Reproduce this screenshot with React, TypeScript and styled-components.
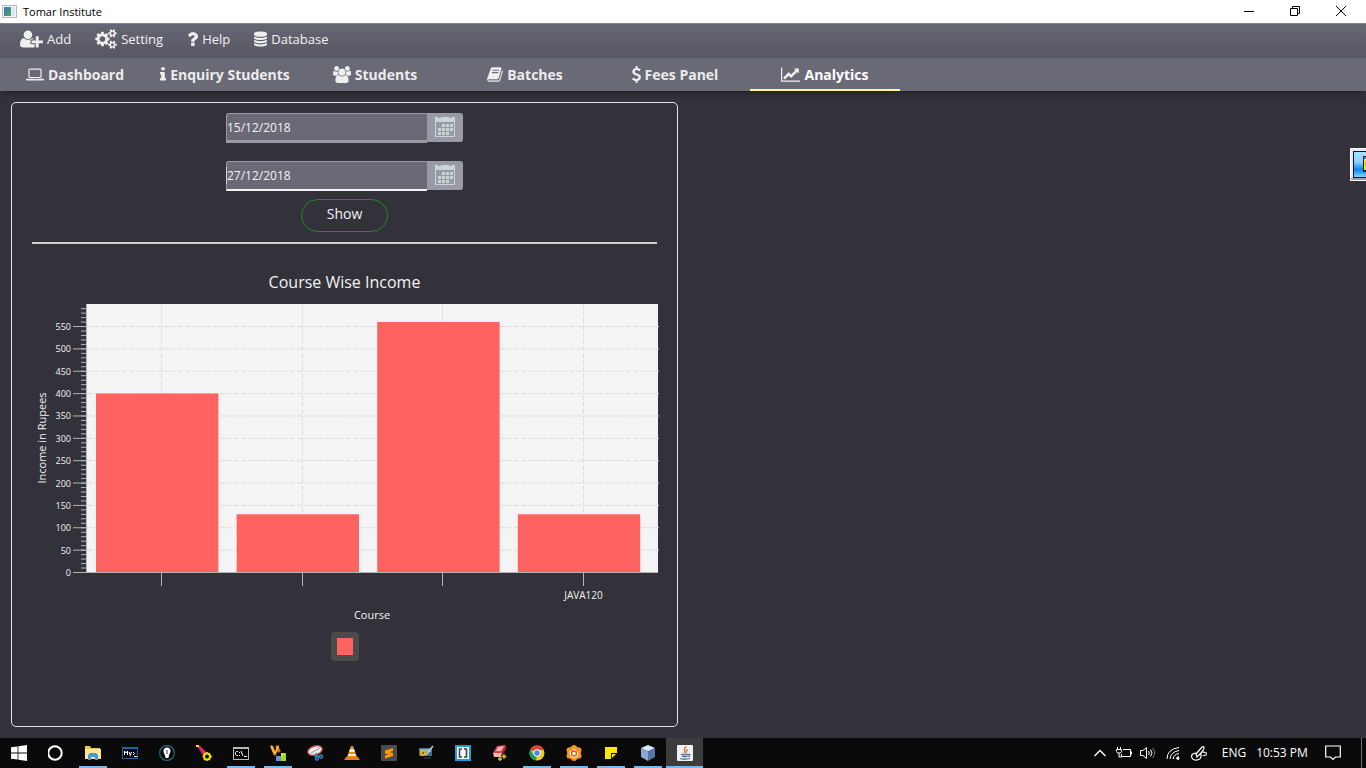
import React from "react";
import styled, { createGlobalStyle, css } from "styled-components";

const GlobalStyle = createGlobalStyle`
  *, *::before, *::after { box-sizing: border-box; }
  body { margin: 0; background: #33323b; font-family: "Open Sans", "Noto Sans", sans-serif; }
  button, input { font: inherit; color: inherit; border: 0; margin: 0; padding: 0; background: none; }
  h1, h2 { margin: 0; font-weight: 400; }
  svg { display: block; flex: none; }
`;

const Page = styled.div`
  position: relative;
  min-height: 100vh;
  display: flex;
  flex-direction: column;
  overflow: hidden;
  color: #f2f2f2;
`;

const TitleBar = styled.header`
  display: flex;
  align-items: center;
  height: 23px;
  padding-left: 2px;
  gap: 6px;
  background: #fff;
  color: #000;
`;

const WindowTitle = styled.h1`
  flex: 1;
  font-size: 11px;
  line-height: 22px;
`;

const WindowButton = styled.button`
  display: flex;
  align-items: center;
  justify-content: center;
  width: 46px;
  height: 20px;
`;

const WindowButtons = styled.div`
  display: flex;
  padding: 0 2px 2px 0;
`;

const MenuBar = styled.nav`
  display: flex;
  height: 35px;
  padding: 0 20px 4px;
  gap: 24px;
  border-top: 1px solid #82818d;
  background: linear-gradient(#666573, #585763);
`;

const MenuButton = styled.button`
  display: flex;
  align-items: center;
  gap: 4px;
  font-size: 13px;
  line-height: 20px;
`;

const Tabs = styled.nav`
  position: relative;
  display: flex;
  height: 33px;
  background: #6a6976;
  box-shadow: 0 5px 6px -3px rgba(0, 0, 0, 0.4);
`;

const Tab = styled.button<{ $active?: boolean }>`
  display: flex;
  align-items: center;
  justify-content: center;
  gap: 4px;
  width: 150px;
  padding-top: 2px;
  border-bottom: 2px solid ${(p) => (p.$active ? "#fffc8c" : "transparent")};
  color: ${(p) => (p.$active ? "#fff" : "#ececec")};
  font-size: 14px;
  font-weight: 700;
  line-height: 20px;
  white-space: nowrap;
`;

const Workspace = styled.main`
  flex: 1;
  display: grid;
  grid-template-columns: minmax(0, 1fr) minmax(0, 1fr);
  gap: 10px;
  padding: 11px;
`;

const Card = styled.section`
  display: flex;
  flex-direction: column;
  align-items: center;
  padding: 10px 20px;
  border: 1px solid #e4e4e6;
  border-radius: 5px;
`;

const DateField = styled.div<{ $focused?: boolean }>`
  position: relative;
  display: flex;
  width: 237px;
  height: 30px;
  margin-bottom: 18px;
  ${(p) =>
    p.$focused &&
    css`
      margin-bottom: 8px;
      &::before {
        content: "";
        position: absolute;
        left: 0;
        top: 6px;
        width: 1px;
        height: 17px;
        background: #d6d6da;
      }
    `}
`;

const DateInput = styled.input<{ $focused?: boolean }>`
  flex: 1;
  min-width: 0;
  padding: 0;
  border: 1px solid #9a99a6;
  border-width: 1px 0 ${(p) => (p.$focused ? 2 : 3)}px 1px;
  border-bottom-color: ${(p) => (p.$focused ? "#f4f4f4" : "#9a99a6")};
  border-top-left-radius: 3px;
  background: #6a6976;
  font-size: 12px;
  outline: none;
`;

const CalendarButton = styled.button`
  display: flex;
  align-items: center;
  justify-content: center;
  width: 36px;
  height: 29px;
  padding-bottom: 1px;
  border-radius: 0 3px 3px 0;
  background: #9a99a6;
`;

const ShowButton = styled.button`
  width: 87px;
  height: 33px;
  padding-bottom: 3px;
  border: 1px solid #228b22;
  border-radius: 17px;
  font-size: 14px;
  line-height: 28px;
`;

const Divider = styled.hr`
  width: 100%;
  height: 2px;
  margin: 10px 0 26px;
  border: 0;
  background: #cfcfcf;
`;

const ChartTitle = styled.h2`
  font-size: 16px;
  line-height: 24px;
`;

const ChartSvg = styled.svg`
  width: 100%;
  height: auto;
  margin-top: 10px;
  overflow: visible;
  fill: #f2f2f2;
  font-size: 10px;
`;

const Legend = styled.div`
  display: flex;
  padding: 6px;
  margin-top: 6px;
  border-radius: 4px;
  background: #4b4b49;
`;

const LegendSwatch = styled.span`
  width: 16px;
  height: 17px;
  background: #ff6361;
`;

const FloatingTool = styled.button`
  position: absolute;
  top: 148px;
  right: -17px;
  width: 33px;
  height: 33px;
  padding: 2px;
  border: 1px solid #fff;
  background: #e9e9ee;
  box-shadow: inset -1px -2px 0 #a0a0a4;
`;

const TaskBar = styled.footer`
  display: flex;
  height: 30px;
  background: #0a0a0a;
`;

const TaskButton = styled.button<{ $running?: boolean; $active?: boolean }>`
  position: relative;
  display: flex;
  align-items: center;
  justify-content: center;
  width: 37px;
  background: ${(p) => (p.$active ? "#3c3c3c" : "transparent")};
  &::after {
    content: "";
    display: ${(p) => (p.$running || p.$active ? "block" : "none")};
    position: absolute;
    bottom: 0;
    left: ${(p) => (p.$active ? 0 : 5)}px;
    right: ${(p) => (p.$active ? 0 : 4)}px;
    height: 2px;
    background: #76b9ed;
  }
`;

const Tray = styled.div`
  display: flex;
  margin-left: auto;
  padding-right: 4px;
`;

const TrayItem = styled.button<{ $width: number }>`
  display: flex;
  align-items: center;
  justify-content: center;
  width: ${(p) => p.$width}px;
  color: #fff;
  font-size: 12px;
  line-height: 16px;
  white-space: nowrap;
`;

const ShowDesktop = styled.button`
  width: 1px;
  margin-left: 3px;
  background: #6e6e6e;
`;

const glyphs = {
  userPlus: "M704 896q-159 0-271.5-112.5t-112.5-271.5 112.5-271.5 271.5-112.5 271.5 112.5 112.5 271.5-112.5 271.5-271.5 112.5zm960 128h352q13 0 22.5 9.5t9.5 22.5v192q0 13-9.5 22.5t-22.5 9.5h-352v352q0 13-9.5 22.5t-22.5 9.5h-192q-13 0-22.5-9.5t-9.5-22.5v-352h-352q-13 0-22.5-9.5t-9.5-22.5v-192q0-13 9.5-22.5t22.5-9.5h352v-352q0-13 9.5-22.5t22.5-9.5h192q13 0 22.5 9.5t9.5 22.5v352zm-736 224q0 52 38 90t90 38h256v238q-68 50-171 50h-874q-121 0-194-69t-73-190q0-53 3.5-103.5t14-109 26.5-108.5 43-97.5 62-81 85.5-53.5 111.5-20q19 0 39 17 79 61 154.5 91.5t164.5 30.5 164.5-30.5 154.5-91.5q20-17 39-17 132 0 217 96h-223q-52 0-90 38t-38 90v192z",
  cogs: "M896 896q0-106-75-181t-181-75-181 75-75 181 75 181 181 75 181-75 75-181zm768 512q0-52-38-90t-90-38-90 38-38 90q0 53 37.5 90.5t90.5 37.5 90.5-37.5 37.5-90.5zm0-1024q0-52-38-90t-90-38-90 38-38 90q0 53 37.5 90.5t90.5 37.5 90.5-37.5 37.5-90.5zm-384 421v185q0 10-7 19.5t-16 10.5l-155 24q-11 35-32 76 34 48 90 115 7 11 7 20 0 12-7 19-23 30-82.5 89.5t-78.5 59.5q-11 0-21-7l-115-90q-37 19-77 31-11 108-23 155-7 24-30 24h-186q-11 0-20-7.5t-10-17.5l-23-153q-34-10-75-31l-118 89q-7 7-20 7-11 0-21-8-144-133-144-160 0-9 7-19 10-14 41-53t47-61q-23-44-35-82l-152-24q-10-1-17-9.5t-7-19.5v-185q0-10 7-19.5t16-10.5l155-24q11-35 32-76-34-48-90-115-7-11-7-20 0-12 7-20 22-30 82-89t79-59q11 0 21 7l115 90q34-18 77-32 11-108 23-154 7-24 30-24h186q11 0 20 7.5t10 17.5l23 153q34 10 75 31l118-89q8-7 20-7 11 0 21 8 144 133 144 160 0 8-7 19-12 16-42 54t-45 60q23 48 34 82l152 23q10 2 17 10.5t7 19.5zm640 533v140q0 16-149 31-12 27-30 52 51 113 51 138 0 4-4 7-122 71-124 71-8 0-46-47t-52-68q-20 2-30 2t-30-2q-14 21-52 68t-46 47q-2 0-124-71-4-3-4-7 0-25 51-138-18-25-30-52-149-15-149-31v-140q0-16 149-31 13-29 30-52-51-113-51-138 0-4 4-7 4-2 35-20t59-34 30-16q8 0 46 46.5t52 67.5q20-2 30-2t30 2q51-71 92-112l6-2q4 0 124 70 4 3 4 7 0 25-51 138 17 23 30 52 149 15 149 31zm0-1024v140q0 16-149 31-12 27-30 52 51 113 51 138 0 4-4 7-122 71-124 71-8 0-46-47t-52-68q-20 2-30 2t-30-2q-14 21-52 68t-46 47q-2 0-124-71-4-3-4-7 0-25 51-138-18-25-30-52-149-15-149-31v-140q0-16 149-31 13-29 30-52-51-113-51-138 0-4 4-7 4-2 35-20t59-34 30-16q8 0 46 46.5t52 67.5q20-2 30-2t30 2q51-71 92-112l6-2q4 0 124 70 4 3 4 7 0 25-51 138 17 23 30 52 149 15 149 31z",
  question: "M1088 1256v240q0 16-12 28t-28 12h-240q-16 0-28-12t-12-28v-240q0-16 12-28t28-12h240q16 0 28 12t12 28zm316-600q0 54-15.5 101t-35 76.5-55 59.5-57.5 43.5-61 35.5q-41 23-68.5 65t-27.5 67q0 17-12 32.5t-28 15.5h-240q-15 0-25.5-18.5t-10.5-37.5v-45q0-83 65-156.5t143-108.5q59-27 84-56t25-76q0-42-46.5-74t-107.5-32q-65 0-108 29-35 25-107 115-13 16-31 16-12 0-25-8l-164-125q-13-10-15.5-25t5.5-28q160-266 464-266 80 0 161 31t146 83 106 127.5 41 158.5z",
  database: "M896 768q237 0 443-43t325-127v170q0 69-103 128t-280 93.5-385 34.5-385-34.5-280-93.5-103-128v-170q119 84 325 127t443 43zm0 768q237 0 443-43t325-127v170q0 69-103 128t-280 93.5-385 34.5-385-34.5-280-93.5-103-128v-170q119 84 325 127t443 43zm0-384q237 0 443-43t325-127v170q0 69-103 128t-280 93.5-385 34.5-385-34.5-280-93.5-103-128v-170q119 84 325 127t443 43zm0-1152q208 0 385 34.5t280 93.5 103 128v128q0 69-103 128t-280 93.5-385 34.5-385-34.5-280-93.5-103-128v-128q0-69 103-128t280-93.5 385-34.5z",
  laptop: "M416 1280q-66 0-113-47t-47-113v-704q0-66 47-113t113-47h1088q66 0 113 47t47 113v704q0 66-47 113t-113 47h-1088zm-32-864v704q0 13 9.5 22.5t22.5 9.5h1088q13 0 22.5-9.5t9.5-22.5v-704q0-13-9.5-22.5t-22.5-9.5h-1088q-13 0-22.5 9.5t-9.5 22.5zm1376 928h160v96q0 40-47 68t-113 28h-1600q-66 0-113-28t-47-68v-96h1760zm-720 96q16 0 16-16t-16-16h-160q-16 0-16 16t16 16h160z",
  info: "M1216 1344v128q0 26-19 45t-45 19h-512q-26 0-45-19t-19-45v-128q0-26 19-45t45-19h64v-384h-64q-26 0-45-19t-19-45v-128q0-26 19-45t45-19h384q26 0 45 19t19 45v576h64q26 0 45 19t19 45zm-128-1152v192q0 26-19 45t-45 19h-256q-26 0-45-19t-19-45v-192q0-26 19-45t45-19h256q26 0 45 19t19 45z",
  users: "M593 896q-162 5-265 128h-134q-82 0-138-40.5t-56-118.5q0-353 124-353 6 0 43.5 21t97.5 42.5 119 21.5q67 0 133-23-5 37-5 66 0 159 81 287zm1071 637q0 120-73 189.5t-194 69.5h-874q-121 0-194-69.5t-73-189.5q0-53 3.5-103.5t14-109 26.5-108.5 43-97.5 62-81 85.5-53.5 111.5-20q10 0 43 21.5t73 48 107 48 135 21.5 135-21.5 107-48 73-48 43-21.5q61 0 111.5 20t85.5 53.5 62 81 43 97.5 26.5 108.5 14 109 3.5 103.5zm-1024-1277q0 106-75 181t-181 75-181-75-75-181 75-181 181-75 181 75 75 181zm704 384q0 159-112.5 271.5t-271.5 112.5-271.5-112.5-112.5-271.5 112.5-271.5 271.5-112.5 271.5 112.5 112.5 271.5zm576 225q0 78-56 118.5t-138 40.5h-134q-103-123-265-128 81-128 81-287 0-29-5-66 66 23 133 23 59 0 119-21.5t97.5-42.5 43.5-21q124 0 124 353zm-128-609q0 106-75 181t-181 75-181-75-75-181 75-181 181-75 181 75 75 181z",
  book: "M1703 478q40 57 18 129l-275 906q-19 64-76.5 107.5t-122.5 43.5h-923q-77 0-148.5-53.5t-99.5-131.5q-24-67-2-127 0-4 3-27t4-37q1-8-3-21.5t-3-19.5q2-11 8-21t16.5-23.5 16.5-23.5q23-38 45-91.5t30-91.5q3-10 .5-30t-.5-28q3-11 17-28t17-23q21-36 42-92t25-90q1-9-2.5-32t.5-28q4-13 22-30.5t22-22.5q19-26 42.5-84.5t27.5-96.5q1-8-3-25.5t-2-26.5q2-8 9-18t18-23 17-21q8-12 16.5-30.5t15-35 16-36 19.5-32 26.5-23.5 36-11.5 47.5 5.5l-1 3q38-9 51-9h761q74 0 114 56t18 130l-274 906q-36 119-71.5 153.5t-128.5 34.5h-869q-27 0-38 15-11 16-1 43 24 70 144 70h923q29 0 56-15.5t35-41.5l300-987q7-22 5-57 38 15 59 43zm-1064 2q-4 13 2 22.5t20 9.5h608q13 0 25.5-9.5t16.5-22.5l21-64q4-13-2-22.5t-20-9.5h-608q-13 0-25.5 9.5t-16.5 22.5zm-83 256q-4 13 2 22.5t20 9.5h608q13 0 25.5-9.5t16.5-22.5l21-64q4-13-2-22.5t-20-9.5h-608q-13 0-25.5 9.5t-16.5 22.5z",
  dollar: "M1362 1185q0 153-99.5 263.5t-258.5 136.5v175q0 14-9 23t-23 9h-135q-13 0-22.5-9.5t-9.5-22.5v-175q-66-9-127.5-31t-101.5-44.5-74-48-46.5-37.5-17.5-18q-17-21-2-41l103-135q7-10 23-12 15-2 24 9l2 2q113 99 243 125 37 8 74 8 81 0 142.5-43t61.5-122q0-28-15-53t-33.5-42-58.5-37.5-66-32-80-32.5q-39-16-61.5-25t-61.5-26.5-62.5-31-56.5-35.5-53.5-42.5-43.5-49-35.5-58-21-66.5-8.5-78q0-138 98-242t255-134v-180q0-13 9.5-22.5t22.5-9.5h135q14 0 23 9t9 23v176q57 6 110.5 23t87 33.5 63.5 37.5 39 29 15 14q17 18 5 38l-81 146q-8 15-23 16-14 3-27-7-3-3-14.5-12t-39-26.5-58.5-32-74.5-26-85.5-11.5q-95 0-155 43t-60 111q0 26 8.5 48t29.5 41.5 39.5 33 56 31 60.5 27 70 27.5q53 20 81 31.5t76 35 75.5 42.5 62 50 53 63.5 31.5 76.5 13 94z",
  chart: "M2048 1536v128h-2048v-1536h128v1408h1920zm-128-1248v435q0 21-19.5 29.5t-35.5-7.5l-121-121-633 633q-10 10-23 10t-23-10l-233-233-416 416-192-192 585-585q10-10 23-10t23 10l233 233 464-464-121-121q-16-16-7.5-35.5t29.5-19.5h435q14 0 23 9t9 23z",
};

interface GlyphProps {
  name: keyof typeof glyphs;
  box: string;
  width: number;
  height: number;
}

const Glyph = ({ name, box, width, height }: GlyphProps) => (
  <svg width={width} height={height} viewBox={box} fill="#efefef" aria-hidden="true">
    <path d={glyphs[name]} />
  </svg>
);

const menuItems: (GlyphProps & { label: string })[] = [
  { label: "Add", name: "userPlus", box: "0 0 2048 1792", width: 23, height: 20 },
  { label: "Setting", name: "cogs", box: "0 0 1920 1792", width: 22, height: 20 },
  { label: "Help", name: "question", box: "388 0 1016 1792", width: 11, height: 20 },
  { label: "Database", name: "database", box: "128 0 1536 1792", width: 13, height: 16 },
];

const tabItems: (GlyphProps & { label: string })[] = [
  { label: "Dashboard", name: "laptop", box: "0 0 1920 1792", width: 18, height: 17 },
  { label: "Enquiry Students", name: "info", box: "576 0 640 1792", width: 6, height: 17 },
  { label: "Students", name: "users", box: "0 0 1920 1792", width: 18, height: 17 },
  { label: "Batches", name: "book", box: "64 0 1664 1792", width: 16, height: 17 },
  { label: "Fees Panel", name: "dollar", box: "430 0 932 1792", width: 9, height: 17 },
  { label: "Analytics", name: "chart", box: "0 0 2048 1792", width: 19, height: 17 },
];

const CalendarIcon = () => (
  <svg width="20" height="20" viewBox="0 0 20 20" aria-hidden="true">
    <path fill="#c9d6d6" fillRule="evenodd" d="M0 0h3v1h3V0h8v1h3V0h3v20H0zM1 5v14h18V5z" />
    <path fill="#c9d6d6" d="M0 19h20v1H0z" />
    <g fill="#c9d6d6">
      {[7, 11, 15].map((y, row) =>
        [3, 7, 11, 15].map((x, col) =>
          (row === 0 && col === 0) || (row === 2 && col === 3) ? null : (
            <rect key={`${x}-${y}`} x={x} y={y} width="3" height="3" />
          )
        )
      )}
    </g>
  </svg>
);

const DatePicker = ({ label, value, focused }: { label: string; value: string; focused?: boolean }) => (
  <DateField $focused={focused}>
    <DateInput type="text" aria-label={label} defaultValue={value} $focused={focused} />
    <CalendarButton type="button" aria-label={`Choose ${label.toLowerCase()}`}>
      <CalendarIcon />
    </CalendarButton>
  </DateField>
);

const income = [
  { course: "", amount: 400 },
  { course: "", amount: 130 },
  { course: "", amount: 560 },
  { course: "JAVA120", amount: 130 },
];

const plot = { left: 54, right: 626, top: 0, bottom: 268, step: 140.6, unit: 0.4472 };

const IncomeChart = () => {
  const yOf = (v: number) => plot.bottom - v * plot.unit;
  const xOf = (i: number) => Math.round(129 + i * plot.step) + 0.5;
  const majors = Array.from({ length: 12 }, (_, i) => i * 50);
  const minors = Array.from({ length: 60 }, (_, i) => i * 10);
  return (
    <ChartSvg viewBox="0 0 625 322" role="img" aria-label="Course Wise Income">
      <rect x={plot.left} y={plot.top} width={plot.right - plot.left} height={plot.bottom} fill="#f4f4f4" />
      <g stroke="#dcdcdc" strokeDasharray="5 2">
        {majors.slice(1).map((v) => (
          <line key={v} x1={plot.left + 1} x2={plot.right + 1} y1={yOf(v) + 0.5} y2={yOf(v) + 0.5} />
        ))}
        {income.map((_, i) => (
          <line key={i} x1={xOf(i)} x2={xOf(i)} y1={plot.top} y2={plot.bottom} />
        ))}
      </g>
      {income.map((d, i) => (
        <rect
          key={i}
          x={64 + i * plot.step}
          y={yOf(d.amount) + 0.4}
          width="122.4"
          height={d.amount * plot.unit}
          fill="#ff6361"
        />
      ))}
      <g stroke="#b4b4b8">
        <line x1={plot.left + 0.5} x2={plot.left + 0.5} y1={plot.top} y2={plot.bottom} />
        <line x1={plot.left - 13} x2={plot.right} y1={plot.bottom + 0.5} y2={plot.bottom + 0.5} />
        {majors.map((v) => (
          <line key={v} x1={plot.left - 13} x2={plot.left} y1={yOf(v) + 0.5} y2={yOf(v) + 0.5} />
        ))}
        {minors.map((v) => (
          <line key={v} x1={plot.left - 5} x2={plot.left} y1={yOf(v) + 0.5} y2={yOf(v) + 0.5} />
        ))}
        {income.map((_, i) => (
          <line key={i} x1={xOf(i)} x2={xOf(i)} y1={plot.bottom + 1} y2={plot.bottom + 14} />
        ))}
      </g>
      <g textAnchor="end">
        {majors.map((v) => (
          <text key={v} x={plot.left - 15} y={Math.round(yOf(v)) + 4} fontSize="9">
            {v}
          </text>
        ))}
      </g>
      <g textAnchor="middle">
        {income.map((d, i) => (
          <text key={i} x={xOf(i)} y={plot.bottom + 27} fontSize="10">
            {d.course}
          </text>
        ))}
        <text x={340} y={plot.bottom + 47} fontSize="11">
          Course
        </text>
        <text transform="translate(14 134) rotate(-90)" fontSize="11">
          Income in Rupees
        </text>
      </g>
    </ChartSvg>
  );
};

const s16 = { width: 16, height: 16, viewBox: "0 0 16 16", "aria-hidden": true } as const;

const taskItems: { label: string; running?: boolean; active?: boolean; icon: React.ReactNode }[] = [
  { label: "Start", icon: <svg {...s16} fill="#fff"><path d="M0 2.3 6.6 1.4V7.6H0zM7.4 1.3 16 0V7.6H7.4zM0 8.4H6.6V14.6L0 13.7zM7.4 8.4H16V16L7.4 14.7z" /></svg> },
  { label: "Cortana", icon: <svg {...s16} fill="none"><circle cx="7" cy="8" r="6.7" stroke="#fff" strokeWidth="2" /></svg> },
  {
    label: "File Explorer", running: true,
    icon: <svg {...s16}><path fill="#f2c05b" d="M0 1h5l1 2h9v11H0z" /><path fill="#ffe49a" d="M0 4h16v10H0z" /><path fill="#3f9bd8" d="M3 15v-5l2-2h6l2 2v5h-3v-3H6v3z" /></svg>,
  },
  {
    label: "MySQL Command Line",
    icon: <svg {...s16}><path fill="#27609c" d="M0 2h16v12H0z" /><path fill="#050b18" d="M1 4h14v9H1z" /><path fill="none" stroke="#fff" d="M2.5 10V6l1.5 2 1.500-2v4M7 7l1 2.500M9.500 7l-1.500 4M11 7l1.500 1.500L11 10M12 11.500h3" /></svg>,
  },
  {
    label: "Inkpad",
    icon: <svg {...s16} fill="none"><circle cx="8" cy="8" r="7.400" stroke="#2b6c7c" strokeWidth="1.200" /><path fill="#fff" d="M4.500 6a3.500 3.500 0 0 1 7 0c0 2-1.500 3-2 7h-3C6 9 4.500 8 4.500 6z" /><path stroke="#333" d="M8 5v4" /></svg>,
  },
  {
    label: "Paint tool",
    icon: <svg {...s16}><path fill="#ef2a5a" d="M1 1 4 1 11 8 8 12z" /><path stroke="#7a1fc0" d="M2 2l7 9" /><path fill="#ffe600" d="M0 0h3v2H0z" /><circle cx="11" cy="11.500" r="3" fill="none" stroke="#e8e000" strokeWidth="2" /><path stroke="#e8e000" strokeWidth="1.500" d="M11 7v2M11 14v2M6.500 11.500h2M13.500 11.500H16M8 8.500l1.500 1.500M14 8.500 12.500 10M8 15l1.500-1.500M14 15l-1.500-1.500" /></svg>,
  },
  {
    label: "Command Prompt", running: true,
    icon: <svg {...s16}><path fill="#b9b9b9" d="M0 2h16v13H0z" /><path fill="#050505" d="M1 4h14v10H1z" /><path fill="none" stroke="#fff" d="M5 6.500H3.500l-1 1v2l1 1H5M6.500 7v1M6.500 10v1M8 6l2 5M11 11.500h3" /></svg>,
  },
  {
    label: "Compiler", running: true,
    icon: <svg {...s16}><g strokeLinecap="round"><path stroke="#c9720c" strokeWidth="3" d="M2 2l3 7M7 2l2 4" /><path stroke="#ffb53a" strokeWidth="2" d="M1.500 1.500l3 7M8 1.500 6 7" /></g><path fill="#6d8fe6" d="M6 11h5v5H6z" /><path fill="#a9d615" d="M11 8h5v8h-5z" /><path fill="#f0e23e" d="M11 8h2v3h-2z" /></svg>,
  },
  {
    label: "Snipping Tool",
    icon: <svg {...s16}><ellipse cx="8" cy="5.500" rx="7.500" ry="4.500" fill="#e9e9ec" stroke="#c03a3a" strokeWidth="1.400" transform="rotate(-18 8 5.500)" /><path stroke="#999" d="M4 8l9-5" /><g fill="none" stroke="#2f86c2" strokeWidth="1.400"><circle cx="10" cy="13.500" r="1.500" /><circle cx="14" cy="11.500" r="1.500" /><path d="M10 12 9 8M12 11H7" /></g></svg>,
  },
  {
    label: "VLC",
    icon: <svg {...s16}><path fill="#f08a18" d="M7 1h2l4 11H3z" /><path fill="#f1efec" d="M6 4h4l1 3H5zM4.500 9h7l.7 2H3.800z" /><path fill="#ee7d0e" d="M2 12h12l2 3H0z" /></svg>,
  },
  {
    label: "Sublime Text",
    icon: <svg {...s16}><rect width="16" height="16" rx="1" fill="#4b4b4b" /><path fill="#ff9800" d="M4 5.500 12 3v3L8.500 7 12 8v3l-8 2.500v-3L7.500 9.500 4 8.500z" /></svg>,
  },
  {
    label: "Photo Viewer",
    icon: <svg {...s16}><path fill="#3d7196" d="M1 3h13v8H1z" /><path fill="#7fb6d4" d="M2 4h11v3H2z" /><circle cx="5" cy="8" r="3" fill="#e9b514" /><circle cx="5" cy="8" r="1" fill="#6e4700" /><path stroke="#d3c8ad" strokeWidth="1.500" d="M15 1 8 10" /><path stroke="#484848" d="M6 13h7" /></svg>,
  },
  {
    label: "Brackets",
    icon: <svg {...s16}><rect width="16" height="16" fill="#249bd5" /><path fill="#fff" d="M2 2h12v12H2z" /><path fill="none" stroke="#3c434a" strokeWidth="1.600" d="M7 4H4.500v8H7M9 4h2.500v8H9" /></svg>,
  },
  {
    label: "Eraser",
    icon: <svg {...s16}><path fill="#d9454b" d="M5 1 14 0l-4 8H1z" /><path fill="#f0b2b2" d="M6 2l6-1-3 5H4zM1 8h9l-1 4H2z" /><path fill="#9c2830" d="M14 0v4l-5 8 1-4z" /><path stroke="#e2c938" strokeWidth="1.300" d="M12 9v5M9.500 11.500h5M8 12v4M6 14h4" /></svg>,
  },
  {
    label: "Chrome", running: true,
    icon: <svg {...s16}><circle cx="8" cy="8" r="7.500" fill="#f6c722" /><path fill="#dc4437" d="M8 8 1.300 4.500A7.500 7.500 0 0 1 14.800 5H8z" /><path fill="#199d59" d="M8 8v3l-1 4.400A7.500 7.500 0 0 1 1.300 4.500L5 10z" /><circle cx="8" cy="8" r="3.700" fill="#fff" /><circle cx="8" cy="8" r="2.700" fill="#4285f4" /></svg>,
  },
  {
    label: "Avast", running: true,
    icon: <svg {...s16}><g fill="#f79a1c"><circle cx="8" cy="8" r="7" /><circle cx="8" cy="2.500" r="2.500" /><circle cx="8" cy="13.500" r="2.500" /><circle cx="3" cy="5" r="2.500" /><circle cx="13" cy="5" r="2.500" /><circle cx="3" cy="11" r="2.500" /><circle cx="13" cy="11" r="2.500" /></g><circle cx="8" cy="8.500" r="4.300" fill="#fff" /><circle cx="8" cy="8.500" r="2.500" fill="none" stroke="#ea5b12" strokeWidth="1.500" /><path stroke="#ea5b12" d="M4 4l3 2M12 5l-3 2" /></svg>,
  },
  { label: "Sticky Notes", running: true, icon: <svg {...s16}><path fill="#ffe600" d="M2 2h12v12H2z" /><path fill="#0a0a0a" d="M8 8h6v6H8z" /><path fill="#ffe600" d="M9 9h4l-4 4z" /></svg> },
  {
    label: "NetBeans", running: true,
    icon: <svg {...s16}><path fill="#dbe9fa" d="M8 0l7 3-7 3.500L1 3z" /><path fill="#8da9d2" d="M1 3l7 3.500V16l-7-4z" /><path fill="#5577a8" d="M15 3 8 6.500V16l7-4z" /></svg>,
  },
  {
    label: "Java", active: true,
    icon: <svg {...s16}><rect width="16" height="16" rx="1" fill="#eef1f4" /><g fill="none" strokeWidth="1.300"><path stroke="#e0701c" d="M9.500 1.500C5 4.500 9 5 7.500 8M11 4.500C8 6 10 6.500 9 8" /><path stroke="#55789c" d="M4 9.500h7M5 11.500h5M3 13.500c2 1 7 1 10 0M11 9.500c3-1 2 2-.500 2" /></g></svg>,
  },
];

const line = { fill: "none", stroke: "#fff", "aria-hidden": true } as const;

export default function App() {
  return (
    <Page>
      <GlobalStyle />
      <TitleBar>
        <svg width="15" height="13" viewBox="0 0 15 13" aria-hidden="true">
          <defs>
            <linearGradient id="appIcon" x2="1" y2="1">
              <stop offset="0" stopColor="#3f77a8" />
              <stop offset="1" stopColor="#4ba36a" />
            </linearGradient>
          </defs>
          <path fill="#b5b9bd" d="M0 0h15v13H0z" />
          <path fill="#f3f5f7" d="M1 1h13v11H1z" />
          <path fill="url(#appIcon)" d="M2 2h7v9H2z" />
          <path fill="#dbe5ea" d="M10 2h3v9h-3z" />
        </svg>
        <WindowTitle>Tomar Institute</WindowTitle>
        <WindowButtons>
          <WindowButton type="button" aria-label="Minimize">
            <svg width="10" height="10" stroke="#000"><path d="M0 5.5h10" /></svg>
          </WindowButton>
          <WindowButton type="button" aria-label="Restore">
            <svg width="10" height="10" fill="none" stroke="#000"><path d="M.5 2.500h7v7h-7zM2.500 2.500v-2h7v7h-2" /></svg>
          </WindowButton>
          <WindowButton type="button" aria-label="Close">
            <svg width="10" height="10" stroke="#000"><path d="M0 0 10 10M10 0 0 10" /></svg>
          </WindowButton>
        </WindowButtons>
      </TitleBar>
      <MenuBar aria-label="Menu">
        {menuItems.map(({ label, ...glyph }) => (
          <MenuButton key={label} type="button">
            <Glyph {...glyph} />
            {label}
          </MenuButton>
        ))}
      </MenuBar>
      <Tabs aria-label="Sections">
        {tabItems.map(({ label, ...glyph }) => (
          <Tab key={label} type="button" $active={label === "Analytics"}>
            <Glyph {...glyph} />
            {label}
          </Tab>
        ))}
      </Tabs>
      <Workspace>
        <Card>
          <DatePicker label="From date" value="15/12/2018" />
          <DatePicker label="To date" value="27/12/2018" focused />
          <ShowButton type="button">Show</ShowButton>
          <Divider />
          <ChartTitle>Course Wise Income</ChartTitle>
          <IncomeChart />
          <Legend>
            <LegendSwatch />
          </Legend>
        </Card>
      </Workspace>
      <FloatingTool type="button" aria-label="Screen tool">
        <svg width="27" height="27" viewBox="0 0 27 27">
          <defs>
            <linearGradient id="tool" x2="0" y2="1">
              <stop offset="0" stopColor="#a4e2ff" />
              <stop offset="0.4" stopColor="#8fd2fb" />
              <stop offset="0.7" stopColor="#0a84ee" />
              <stop offset="1" stopColor="#8fdcff" />
            </linearGradient>
          </defs>
          <rect x=".5" y=".5" width="26" height="26" fill="url(#tool)" stroke="#06124e" />
          <path fill="#20242c" d="M10 5h12v16H10z" />
          <path fill="#ffe600" d="M11 7h10v12H11z" />
          <path fill="#f2a81c" d="M12 11h8v4h-8z" />
          <path fill="#3e93d6" d="M11 6h3v2h-3z" />
        </svg>
      </FloatingTool>
      <TaskBar>
        {taskItems.map((item) => (
          <TaskButton key={item.label} type="button" aria-label={item.label} $running={item.running} $active={item.active}>
            {item.icon}
          </TaskButton>
        ))}
        <Tray>
          <TrayItem type="button" aria-label="Show hidden icons" $width={24}>
            <svg {...line} width="12" height="8"><path d="M.5 7 6 1.500 11.500 7" strokeWidth="1.300" /></svg>
          </TrayItem>
          <TrayItem type="button" aria-label="Battery" $width={24}>
            <svg {...line} width="16" height="12"><path d="M7 2.500h7.500v7H5.500V7M15.500 4.500v3M1.500 0v2M4.500 0v2M.5 2.500h5v2l-1 1.500h-3L.5 4.500zM3 6v4h2.500" /></svg>
          </TrayItem>
          <TrayItem type="button" aria-label="Volume" $width={24}>
            <svg {...line} width="16" height="14"><path d="M.5 4.500h2.500l3.500-3v11l-3.500-3H.5zM8.500 5q1.500 2 0 4M10.500 3.500q3 3.500 0 7" /><path stroke="#777" d="M12.500 2q4.500 5 0 10" /></svg>
          </TrayItem>
          <TrayItem type="button" aria-label="Network" $width={26}>
            <svg {...line} width="14" height="14"><path d="M1 13Q1 3 13 1.500M4 13Q4.500 6 13 4.500M7 13Q7.500 8.500 13 7.500M10 13Q10.500 11 13 10.500" /><circle cx="12" cy="12.500" r="1" fill="#fff" /></svg>
          </TrayItem>
          <TrayItem type="button" aria-label="Windows Ink" $width={26}>
            <svg {...line} width="16" height="16"><path strokeWidth="1.200" d="M6 12 5 9l6-7q1.500-1 2 .5T9 9zM5 8Q0 8.500.7 12t5.300 3 4-5 4-2.500 1 2.500-2.500 1" /></svg>
          </TrayItem>
          <TrayItem type="button" $width={44}>ENG</TrayItem>
          <TrayItem type="button" $width={52}>10:53 PM</TrayItem>
          <TrayItem type="button" aria-label="Notifications" $width={50}>
            <svg {...line} width="16" height="16"><path strokeWidth="1.200" d="M.7 1h14.600v11H10.500L8 14.500 5.500 12H.7z" /></svg>
          </TrayItem>
          <ShowDesktop type="button" aria-label="Show desktop" />
        </Tray>
      </TaskBar>
    </Page>
  );
}
